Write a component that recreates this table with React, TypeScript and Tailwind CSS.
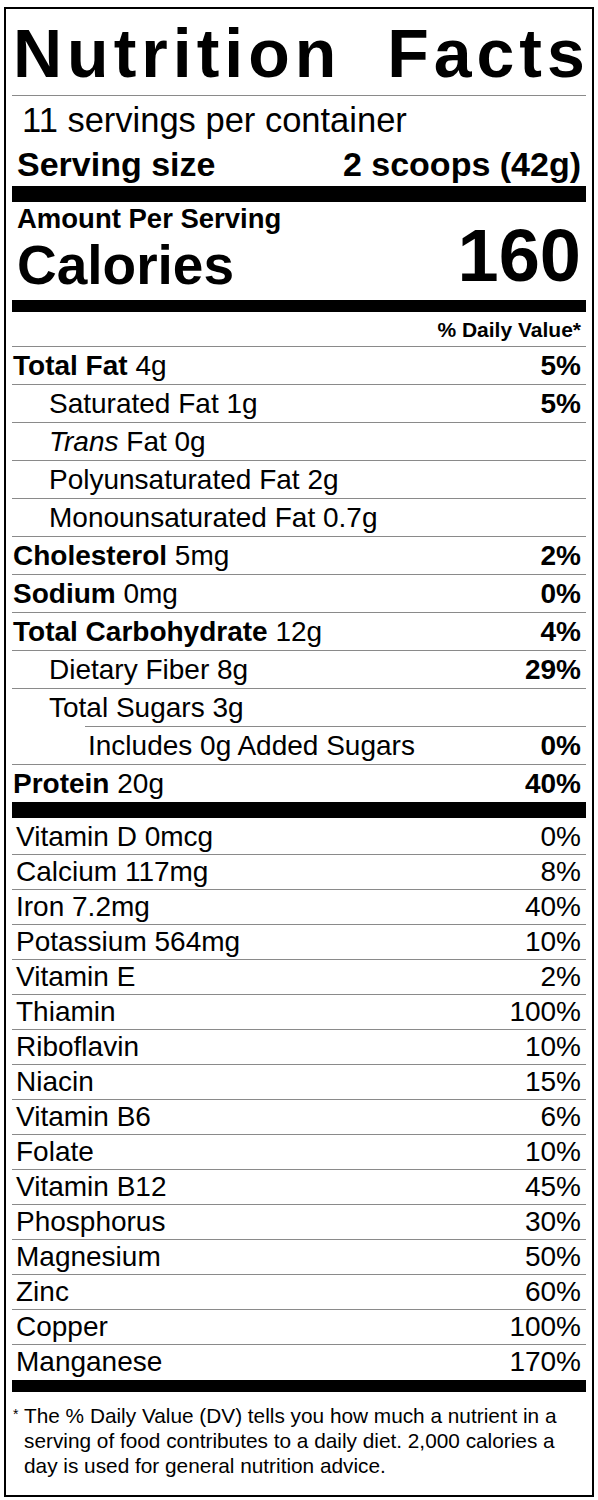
const font = { fontFamily: '"Liberation Sans", Arial, Helvetica, sans-serif' };

type Nutrient = {
  label: string;
  amount?: string;
  dv?: string;
  bold?: boolean;
  indent?: 0 | 1 | 2;
  italicPrefix?: string;
};

const main: Nutrient[] = [
  { label: "Total Fat", amount: "4g", dv: "5%", bold: true },
  { label: "Saturated Fat", amount: "1g", dv: "5%", indent: 1 },
  { label: "Fat", amount: "0g", indent: 1, italicPrefix: "Trans" },
  { label: "Polyunsaturated Fat", amount: "2g", indent: 1 },
  { label: "Monounsaturated Fat", amount: "0.7g", indent: 1 },
  { label: "Cholesterol", amount: "5mg", dv: "2%", bold: true },
  { label: "Sodium", amount: "0mg", dv: "0%", bold: true },
  { label: "Total Carbohydrate", amount: "12g", dv: "4%", bold: true },
  { label: "Dietary Fiber", amount: "8g", dv: "29%", indent: 1 },
  { label: "Total Sugars", amount: "3g", indent: 1 },
  { label: "Includes 0g Added Sugars", dv: "0%", indent: 2 },
  { label: "Protein", amount: "20g", dv: "40%", bold: true },
];

const vitamins = [
  ["Vitamin D 0mcg", "0%"],
  ["Calcium 117mg", "8%"],
  ["Iron 7.2mg", "40%"],
  ["Potassium 564mg", "10%"],
  ["Vitamin E", "2%"],
  ["Thiamin", "100%"],
  ["Riboflavin", "10%"],
  ["Niacin", "15%"],
  ["Vitamin B6", "6%"],
  ["Folate", "10%"],
  ["Vitamin B12", "45%"],
  ["Phosphorus", "30%"],
  ["Magnesium", "50%"],
  ["Zinc", "60%"],
  ["Copper", "100%"],
  ["Manganese", "170%"],
];

const NutrientRow = ({ item }: { item: Nutrient }) => {
  const indent =
    item.indent === 2 ? "ml-[73px] pl-[3px]" : item.indent === 1 ? "pl-[37px]" : "pl-[1px]";
  return (
    <div
      className={`flex h-[38px] items-center justify-between border-t border-[#8a8a8a] pr-[5px] text-[28px] leading-[30px] ${indent}`}
    >
      <span>
        {item.italicPrefix && <i>{item.italicPrefix} </i>}
        <span className={item.bold ? "font-bold" : ""}>{item.label}</span>
        {item.amount && <span> {item.amount}</span>}
      </span>
      {item.dv && <span className="font-bold">{item.dv}</span>}
    </div>
  );
};

export default function App() {
  return (
    <div className="bg-white pt-[7px] pl-[4px]" style={font}>
      <div className="w-[590px] border-2 border-black px-[6px] pb-[17px] text-black">
        <h1 className="pt-[10px] pl-[1px] text-[68px] leading-[68px] font-bold tracking-[5px] [word-spacing:22px] whitespace-nowrap">
          Nutrition Facts
        </h1>
        <div className="mt-[8px] h-px bg-[#8a8a8a]" />
        <div className="mt-[8px] pl-[10px] text-[34.5px] leading-[32px]">11 servings per container</div>
        <div className="mt-[12px] flex justify-between px-[5px] text-[34px] leading-[32px] font-bold">
          <span>Serving size</span>
          <span>2 scoops (42g)</span>
        </div>
        <div className="mt-[6px] h-[16px] bg-black" />

        <div className="flex items-end justify-between px-[5px] pt-[4px] pb-[7px]">
          <div className="flex flex-col">
            <span className="text-[27.5px] leading-[26px] font-bold">Amount Per Serving</span>
            <span className="mt-[5px] text-[55px] leading-[56px] font-bold">Calories</span>
          </div>
          <span className="text-[74px] leading-[74px] font-bold">160</span>
        </div>
        <div className="h-[12px] bg-black" />

        <div className="mt-[7px] pr-[5px] text-right text-[21px] leading-[22px] font-bold">% Daily Value*</div>
        <div className="mt-[5px]">
          {main.map((item, i) => (
            <NutrientRow key={i} item={item} />
          ))}
        </div>
        <div className="h-[16px] bg-black" />

        <div className="py-[1px]">
          {vitamins.map(([name, dv], i) => (
            <div
              key={i}
              className={`flex h-[35px] items-center justify-between pr-[5px] pl-[4px] text-[28px] leading-[30px] ${
                i > 0 ? "border-t border-[#8a8a8a]" : ""
              }`}
            >
              <span>{name}</span>
              <span>{dv}</span>
            </div>
          ))}
        </div>
        <div className="h-[12px] bg-black" />

        <div className="mt-[11px] flex text-[20.8px] leading-[25px]">
          <span className="w-[12px] shrink-0 pl-[1px] text-[14px] leading-[22px]">*</span>
          <p>
            The % Daily Value (DV) tells you how much a nutrient in a
            <br />
            serving of food contributes to a daily diet. 2,000 calories a
            <br />
            day is used for general nutrition advice.
          </p>
        </div>
      </div>
    </div>
  );
}
